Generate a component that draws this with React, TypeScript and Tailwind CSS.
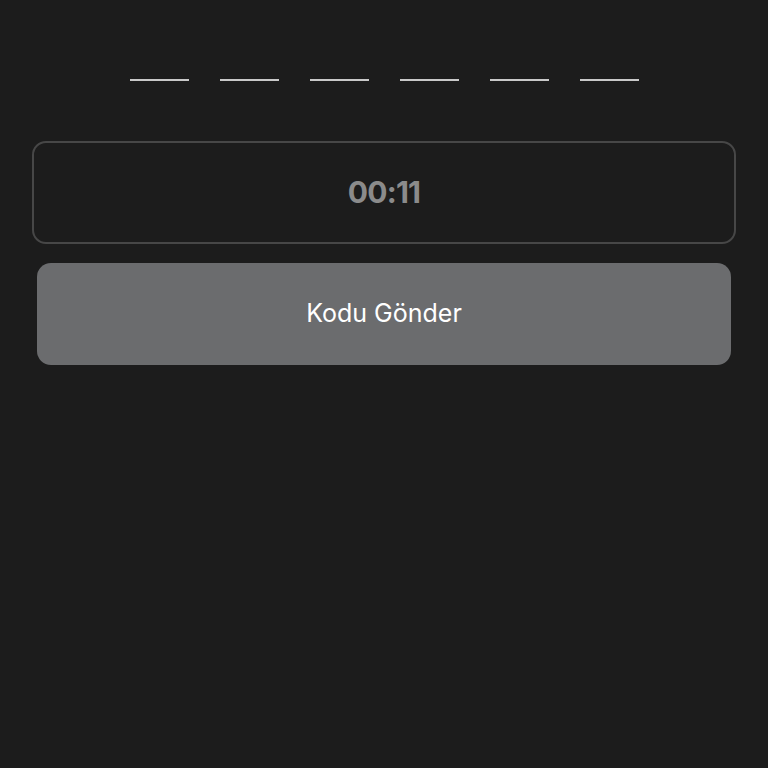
import React from 'react';

const slots = [0, 1, 2, 3, 4, 5];

export default function App() {
  return (
    <div className="min-h-screen w-full bg-[#1c1c1c] font-['Inter',sans-serif]">
      <div className="flex justify-center gap-[31px] pt-[79px]">
        {slots.map((i) => (
          <div key={i} className="h-[2px] w-[59px] bg-[#c9c9c9]" />
        ))}
      </div>

      <div className="mx-[32px] mt-[60px] flex h-[103px] items-center justify-center rounded-[14px] border-2 border-[#474747]">
        <span className="text-[30px] font-bold tracking-tight text-[#8b8b8b]">00:11</span>
      </div>

      <button className="mx-[37px] mt-[19px] flex h-[102px] w-[694px] items-center justify-center rounded-[14px] bg-[#6b6c6e]">
        <span className="text-[25px] text-white">Kodu Gönder</span>
      </button>
    </div>
  );
}
